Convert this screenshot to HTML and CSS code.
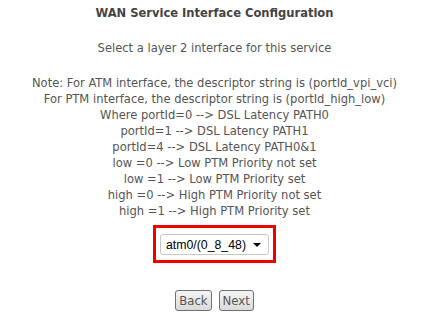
FILE: index.html
```html
<!DOCTYPE html>
<html>
<head>
<meta charset="utf-8">
<link rel="stylesheet" href="styles.css">
</head>
<body>
<div class="page">
  <div class="title">WAN Service Interface Configuration</div>
  <div class="subtitle">Select a layer 2 interface for this service</div>
  <div class="note">
    <div>Note: For ATM interface, the descriptor string is (portId_vpi_vci)</div>
    <div>For PTM interface, the descriptor string is (portId_high_low)</div>
    <div>Where portId=0 --&gt; DSL Latency PATH0</div>
    <div>portId=1 --&gt; DSL Latency PATH1</div>
    <div>portId=4 --&gt; DSL Latency PATH0&amp;1</div>
    <div>low =0 --&gt; Low PTM Priority not set</div>
    <div>low =1 --&gt; Low PTM Priority set</div>
    <div>high =0 --&gt; High PTM Priority not set</div>
    <div>high =1 --&gt; High PTM Priority set</div>
  </div>
  <div class="select-wrap">
    <div class="select-box">
      <div class="select">
        <span class="select-value">atm0/(0_8_48)</span>
        <svg class="caret" width="8" height="4" viewBox="0 0 8 4"><path d="M0 0H8L4 4Z" fill="#000"/></svg>
      </div>
    </div>
  </div>
  <div class="buttons">
    <button class="btn">Back</button>
    <button class="btn">Next</button>
  </div>
</div>
</body>
</html>
```
FILE: styles.css
```css
html, body {
  margin: 0;
  padding: 0;
  background: #fff;
}
.page {
  font-family: "DejaVu Sans Condensed", "DejaVu Sans", sans-serif;
  font-size: 12.8px;
  color: #555;
  text-align: center;
  padding-top: 5px;
}
.title {
  font-weight: bold;
  font-size: 12.8px;
  line-height: 16px;
  color: #444;
}
.subtitle {
  margin-top: 19px;
  line-height: 16px;
}
.note {
  margin-top: 19px;
  line-height: 16px;
}
.select-wrap {
  display: flex;
  justify-content: center;
  margin-top: 6px;
}
.select-box {
  border: 3px solid #ee0000;
  padding: 6px 4px 5px;
  width: 123px;
  box-sizing: border-box;
}
.select {
  display: flex;
  align-items: center;
  justify-content: space-between;
  height: 21px;
  box-sizing: border-box;
  border: 1px solid #c8c8c8;
  border-radius: 3px;
  background: #fff;
  padding: 0 7px 0 5px;
}
.select-value {
  font-family: "Liberation Sans", Arial, sans-serif;
  color: #000;
  font-size: 12.3px;
}
.buttons {
  display: flex;
  justify-content: center;
  gap: 7px;
  margin-top: 27px;
}
.btn {
  font-family: "DejaVu Sans Condensed", "DejaVu Sans", sans-serif;
  font-size: 13px;
  color: #555;
  height: 21px;
  padding: 0 3px;
  border: 1px solid #707070;
  border-radius: 3px;
  background: linear-gradient(#f4f4f4, #dadada);
}
```
